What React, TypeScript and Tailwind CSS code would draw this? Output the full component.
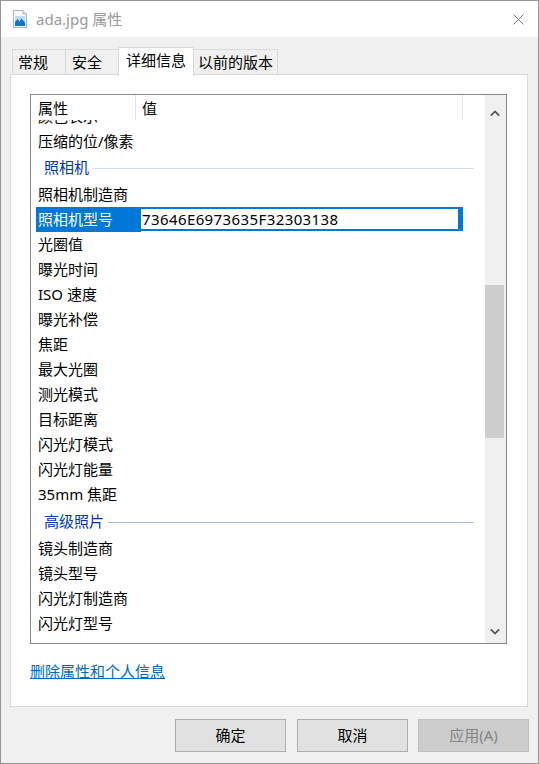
const rowsTop = ["颜色表示", "压缩的位/像素"];
const rowsCamera = ["照相机制造商"];
const rowsCameraRest = [
  "光圈值",
  "曝光时间",
  "ISO 速度",
  "曝光补偿",
  "焦距",
  "最大光圈",
  "测光模式",
  "目标距离",
  "闪光灯模式",
  "闪光灯能量",
  "35mm 焦距",
];
const rowsAdvanced = ["镜头制造商", "镜头型号", "闪光灯制造商", "闪光灯型号"];

function Row({ label }: { label: string }) {
  return <div className="h-[25px] shrink-0 pl-[7px] leading-[24px] text-[#000]">{label}</div>;
}

function Group({ label, line, height }: { label: string; line: string; height: string }) {
  return (
    <div className={`flex shrink-0 items-center pr-[11px] pl-[13px] leading-[24px] text-[#0033bc] ${height}`}>
      <span className="-mt-[2px]">{label}</span>
      <div className={`mt-[1px] ml-[4px] h-px flex-1 ${line}`} />
    </div>
  );
}

function Tab({ label, width }: { label: string; width: string }) {
  return (
    <div className={`mt-[2px] -ml-px h-[25px] border border-b-0 border-[#d9d9d9] bg-[#f0f0f0] leading-[24px] first:ml-0 ${width}`}>
      {label}
    </div>
  );
}

function DialogButton({ label, disabled }: { label: string; disabled?: boolean }) {
  return (
    <div
      className={`flex h-[33px] w-[111px] items-center justify-center border ${
        disabled ? "border-[#bfbfbf] bg-[#cccccc] text-[#838383]" : "border-[#adadad] bg-[#e1e1e1] text-[#000]"
      }`}
    >
      {label}
    </div>
  );
}

export default function App() {
  return (
    <div className="flex h-[764px] w-[539px] flex-col overflow-hidden border border-[#949494] bg-[#f0f0f0] font-['Noto_Sans','Noto_Sans_CJK_SC',sans-serif] text-[15px] text-[#000]">
      <div className="flex h-[36px] shrink-0 items-center bg-white pr-[14px] pl-[12px]">
        <svg width="14" height="18" viewBox="0 0 14 18" className="shrink-0">
          <path d="M0.5 0.5H10L13.5 4V17.5H0.5Z" fill="#f7f9fb" stroke="#a9b4c0" />
          <path d="M10 0.5V4H13.5" fill="#e6ebf0" stroke="#a9b4c0" />
          <rect x="2" y="6" width="10" height="10" fill="#bcdcf5" />
          <path d="M2 16V12L4.5 9L6.5 11.5L8.5 8.5L12 12.5V16Z" fill="#0a78d0" />
        </svg>
        <span className="ml-[9px] flex-1 text-[#99999b]">ada.jpg 属性</span>
        <svg width="11" height="11" viewBox="0 0 11 11" className="shrink-0">
          <path d="M0.5 0.5L10.5 10.5M10.5 0.5L0.5 10.5" stroke="#7a7a7a" strokeWidth="1" fill="none" />
        </svg>
      </div>

      <div className="flex flex-1 flex-col pr-[10px] pl-[9px]">
        <div className="mt-[10px] flex h-[27px] shrink-0 items-start pl-[2px]">
          <Tab label="常规" width="w-[54px] pl-[5px]" />
          <Tab label="安全" width="w-[54px] pl-[6px]" />
          <div className="relative z-10 -ml-px h-[29px] w-[76px] border border-b-0 border-[#d9d9d9] bg-white pl-[7px] leading-[24px]">
            详细信息
          </div>
          <Tab label="以前的版本" width="w-[85px] pl-[4px]" />
        </div>

        <div className="flex h-[633px] shrink-0 flex-col border border-[#d9d9d9] bg-white pt-[19px] pr-[20px] pl-[19px]">
          <div className="flex h-[550px] shrink-0 border border-[#828790] bg-white">
            <div className="flex min-w-0 flex-1 flex-col overflow-hidden">
              <div className="relative z-10 flex h-[25px] shrink-0 bg-white leading-[26px]">
                <div className="w-[105px] border-r border-[#e5e5e5] pl-[7px]">属性</div>
                <div className="w-[327px] border-r border-[#e5e5e5] pl-[6px]">值</div>
              </div>
              <div className="-mt-[16px] flex flex-col">
                {rowsTop.map((r) => (
                  <Row key={r} label={r} />
                ))}
                <Group label="照相机" line="bg-[#d5dff0]" height="h-[28px]" />
                {rowsCamera.map((r) => (
                  <Row key={r} label={r} />
                ))}
                <div className="ml-[5px] flex h-[25px] shrink-0 leading-[24px]">
                  <div className="w-[105px] bg-[#0078d7] pl-[2px] text-white">照相机型号</div>
                  <div className="h-[24px] w-[322px] border-y-2 border-r-[5px] border-l-0 border-[#0078d7] pl-px leading-[20px] tracking-[0.4px]">
                    73646E6973635F32303138
                  </div>
                </div>
                {rowsCameraRest.map((r) => (
                  <Row key={r} label={r} />
                ))}
                <Group label="高级照片" line="bg-[#a8bde0]" height="h-[29px]" />
                {rowsAdvanced.map((r) => (
                  <Row key={r} label={r} />
                ))}
              </div>
            </div>
            <div className="flex w-[21px] shrink-0 flex-col bg-[#f0f0f0]">
              <div className="flex h-[22px] shrink-0 items-end justify-center pr-[2px]">
                <svg width="10" height="7" viewBox="0 0 10 7">
                  <path d="M0.8 5.6L5 1.4L9.2 5.6" stroke="#555" strokeWidth="1.8" fill="none" />
                </svg>
              </div>
              <div className="mt-[168px] h-[153px] w-[19px] bg-[#cdcdcd]" />
              <div className="flex flex-1 items-end justify-center pr-[2px] pb-[8px]">
                <svg width="10" height="7" viewBox="0 0 10 7">
                  <path d="M0.8 1.4L5 5.6L9.2 1.4" stroke="#555" strokeWidth="1.8" fill="none" />
                </svg>
              </div>
            </div>
          </div>
          <a className="mt-[16px] self-start text-[#0066cc] underline">删除属性和个人信息</a>
        </div>

        <div className="mt-[12px] -mr-[1px] flex justify-end">
          <DialogButton label="确定" />
          <div className="ml-[11px]">
            <DialogButton label="取消" />
          </div>
          <div className="ml-[10px]">
            <DialogButton label="应用(A)" disabled />
          </div>
        </div>
      </div>
    </div>
  );
}
